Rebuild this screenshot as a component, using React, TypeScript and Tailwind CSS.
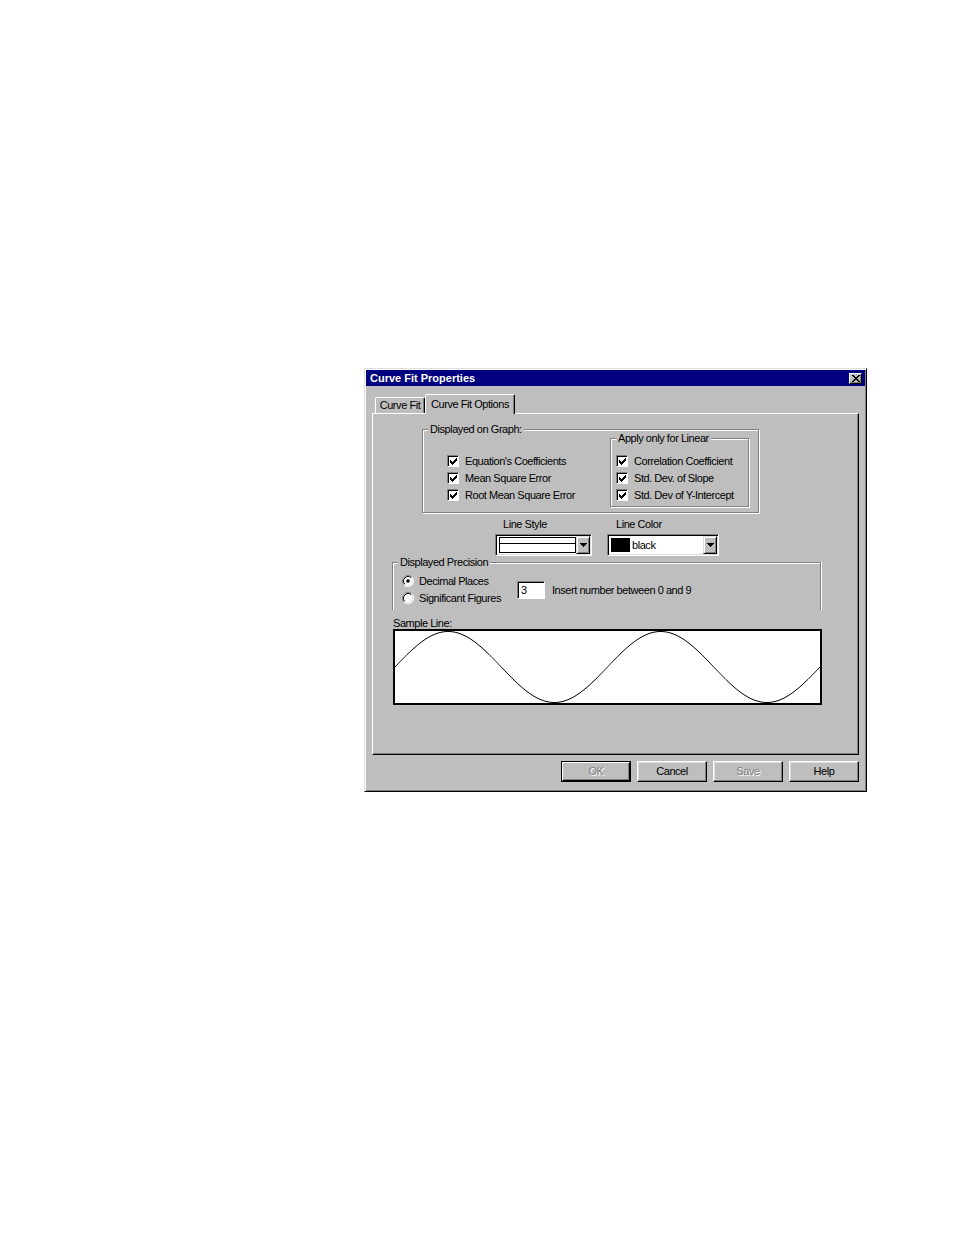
import React from "react";

function Check() {
  return (
    <span className="w-[12px] h-[12px] shrink-0 bg-white border border-t-[#808080] border-l-[#808080] border-r-white border-b-white shadow-[inset_1px_1px_0_#000] flex items-center justify-center pl-[1px] pt-[1px]">
      <svg width="7" height="7" viewBox="0 0 7 7" shapeRendering="crispEdges">
        <path d="M0 2h1v3H0z M1 3h1v3H1z M2 4h1v3H2z M3 3h1v3H3z M4 2h1v3H4z M5 1h1v3H5z M6 0h1v3H6z" fill="#000" />
      </svg>
    </span>
  );
}

function CheckRow({ label }: { label: string }) {
  return (
    <div className="flex items-center h-[12px]">
      <Check />
      <span className="ml-[6px] leading-[12px] whitespace-nowrap">{label}</span>
    </div>
  );
}

function Radio({ on }: { on?: boolean }) {
  return (
    <svg width="12" height="12" viewBox="0 0 12 12" className="shrink-0">
      <circle cx="6" cy="6" r="5.5" fill="#fff" />
      <path d="M2.11 9.89 A5.5 5.5 0 0 1 9.89 2.11" stroke="#808080" strokeWidth="1" fill="none" />
      <path d="M9.89 2.11 A5.5 5.5 0 0 1 2.11 9.89" stroke="#fff" strokeWidth="1" fill="none" />
      <path d="M2.82 9.18 A4.5 4.5 0 0 1 9.18 2.82" stroke="#000" strokeWidth="1" fill="none" />
      <path d="M9.18 2.82 A4.5 4.5 0 0 1 2.82 9.18" stroke="#dfdfdf" strokeWidth="1" fill="none" />
      {on && <circle cx="6" cy="6" r="1.8" fill="#000" />}
    </svg>
  );
}

function RadioRow({ label, on }: { label: string; on?: boolean }) {
  return (
    <div className="flex items-center h-[12px]">
      <Radio on={on} />
      <span className="ml-[5px] leading-[12px] whitespace-nowrap">{label}</span>
    </div>
  );
}

function Arrow() {
  return (
    <span className="w-[14px] h-full shrink-0 ml-auto bg-[#bebebe] border border-t-[#dfdfdf] border-l-[#dfdfdf] border-r-black border-b-black shadow-[inset_1px_1px_0_#fff,inset_-1px_-1px_0_#808080] flex items-center justify-center">
      <svg width="7" height="4" viewBox="0 0 7 4" shapeRendering="crispEdges">
        <path d="M0 0h7v1H0z M1 1h5v1H1z M2 2h3v1H2z M3 3h1v1H3z" fill="#000" />
      </svg>
    </span>
  );
}

function Button({ label, disabled, isDefault }: { label: string; disabled?: boolean; isDefault?: boolean }) {
  const text = disabled ? (
    <span className="text-[#808080] [text-shadow:1px_1px_0_#fff]">{label}</span>
  ) : (
    <span>{label}</span>
  );
  if (isDefault) {
    return (
      <div className="w-[70px] h-[21px] border border-black">
        <div className="w-full h-full border border-t-white border-l-white border-r-black border-b-black shadow-[inset_-1px_-1px_0_#808080] flex items-center justify-center leading-[12px] pb-[2px]">
          {text}
        </div>
      </div>
    );
  }
  return (
    <div className="w-[70px] h-[21px] border border-t-white border-l-white border-r-black border-b-black shadow-[inset_-1px_-1px_0_#808080,inset_1px_1px_0_#dfdfdf] flex items-center justify-center leading-[12px] pb-[2px]">
      {text}
    </div>
  );
}

export default function App() {
  const W = 425;
  const pts = Array.from({ length: W + 1 }, (_, i) => `${i},${(36 - 35.5 * Math.sin((2 * Math.PI * 2 * i) / W)).toFixed(2)}`).join(" ");

  return (
    <div className="w-[954px] h-[1235px] bg-white pt-[368px] pl-[364px] font-['Liberation_Sans',Arial,sans-serif] text-[11px] tracking-[-0.45px] text-black">
      <div className="w-[503px] h-[424px] bg-[#bebebe] border border-t-[#dfdfdf] border-l-[#dfdfdf] border-r-black border-b-black shadow-[inset_1px_1px_0_#fff,inset_-1px_-1px_0_#808080] pt-[1px] px-[1px]">
        {/* Title bar */}
        <div className="h-[16px] bg-[#000080] flex items-center pl-[4px] pr-[3px]">
          <span className="text-white font-bold tracking-normal text-[11px] leading-[14px]">Curve Fit Properties</span>
          <span className="ml-auto w-[13px] h-[11px] bg-[#bebebe] border border-t-white border-l-white border-r-black border-b-black shadow-[inset_-1px_-1px_0_#808080] flex items-center justify-center">
            <svg width="8" height="7" viewBox="0 0 8 7" shapeRendering="crispEdges">
              <path d="M0 0h2v1H0z M6 0h2v1H6z M1 1h2v1H1z M5 1h2v1H5z M2 2h4v1H2z M3 3h2v1H3z M2 4h4v1H2z M1 5h2v1H1z M5 5h2v1H5z M0 6h2v1H0z M6 6h2v1H6z" fill="#000" />
            </svg>
          </span>
        </div>

        <div className="ml-[6px] w-[487px]">
          {/* Tabs */}
          <div className="mt-[8px] h-[19px] flex items-end pl-[3px]">
            <div className="w-[50px] h-[16px] border-t border-l border-r border-t-white border-l-white border-r-black rounded-t-[2px] shadow-[inset_-1px_0_0_#808080] flex items-center justify-center leading-[12px] pb-[2px]">
              Curve Fit
            </div>
            <div className="relative z-10 -mb-[1px] w-[90px] h-[20px] bg-[#bebebe] border-t border-l border-r border-t-white border-l-white border-r-black rounded-t-[2px] shadow-[inset_-1px_0_0_#808080] flex items-center justify-center leading-[12px] pb-[1px]">
              Curve Fit Options
            </div>
          </div>

          {/* Panel */}
          <div className="h-[342px] border border-t-white border-l-white border-r-black border-b-black shadow-[inset_-1px_-1px_0_#808080]">
            {/* Displayed on Graph */}
            <fieldset className="ml-[49px] mt-[9px] w-[337px] border border-[#808080] shadow-[1px_1px_0_#fff,inset_1px_1px_0_#fff]">
              <legend className="ml-[5px] px-[2px] leading-[12px] bg-[#bebebe]">Displayed on Graph:</legend>
              <div className="flex items-start pb-[5px]">
                <div className="w-[187px] pl-[24px] pt-[20px] flex flex-col gap-[5px]">
                  <CheckRow label="Equation's Coefficients" />
                  <CheckRow label="Mean Square Error" />
                  <CheckRow label="Root Mean Square Error" />
                </div>
                <fieldset className="-mt-[3px] w-[139px] border border-[#808080] shadow-[1px_1px_0_#fff,inset_1px_1px_0_#fff]">
                  <legend className="ml-[5px] px-[2px] leading-[12px] bg-[#bebebe]">Apply only for Linear</legend>
                  <div className="pl-[5px] pt-[11px] pb-[5px] flex flex-col gap-[5px]">
                    <CheckRow label="Correlation Coefficient" />
                    <CheckRow label="Std. Dev. of Slope" />
                    <CheckRow label="Std. Dev of Y-Intercept" />
                  </div>
                </fieldset>
              </div>
            </fieldset>

            {/* Line style / color */}
            <div className="flex mt-[5px] ml-[122px]">
              <div className="w-[97px]">
                <div className="pl-[8px] leading-[12px]">Line Style</div>
                <div className="mt-[4px] h-[22px] bg-white border border-t-[#808080] border-l-[#808080] border-r-white border-b-white shadow-[inset_1px_1px_0_#000,inset_-1px_-1px_0_#dfdfdf] p-[1px] flex items-center">
                  <div className="ml-[2px] w-[77px] h-[16px] border border-black flex flex-col">
                    <div className="h-[6px] border-b border-black"></div>
                  </div>
                  <Arrow />
                </div>
              </div>
              <div className="w-[112px] ml-[15px]">
                <div className="pl-[9px] leading-[12px]">Line Color</div>
                <div className="mt-[4px] h-[22px] bg-white border border-t-[#808080] border-l-[#808080] border-r-white border-b-white shadow-[inset_1px_1px_0_#000,inset_-1px_-1px_0_#dfdfdf] p-[1px] flex items-center">
                  <div className="ml-[2px] w-[19px] h-[14px] bg-black"></div>
                  <span className="ml-[2px] leading-[12px]">black</span>
                  <Arrow />
                </div>
              </div>
            </div>

            {/* Displayed Precision */}
            <fieldset className="ml-[19px] w-[429px] border border-b-0 border-[#808080] shadow-[1px_0_0_#fff,inset_1px_1px_0_#fff]">
              <legend className="ml-[5px] px-[2px] leading-[12px] bg-[#bebebe]">Displayed Precision</legend>
              <div className="flex items-start pt-[7px] pb-[6px]">
                <div className="w-[124px] pl-[9px] flex flex-col gap-[5px]">
                  <RadioRow label="Decimal Places" on />
                  <RadioRow label="Significant Figures" />
                </div>
                <div className="mt-[6px] w-[28px] h-[18px] bg-white border border-t-[#808080] border-l-[#808080] border-r-white border-b-white shadow-[inset_1px_1px_0_#000] pl-[3px] leading-[16px]">
                  3
                </div>
                <div className="ml-[7px] mt-[9px] leading-[12px] whitespace-nowrap">Insert number between 0 and 9</div>
              </div>
            </fieldset>

            {/* Sample line */}
            <div className="mt-[7px] ml-[20px] leading-[12px]">Sample Line:</div>
            <div className="ml-[20px] w-[429px] h-[76px] border-2 border-black bg-white">
              <svg width="425" height="72" viewBox="0 0 425 72" className="block">
                <polyline points={pts} fill="none" stroke="#000" strokeWidth="1" />
              </svg>
            </div>
          </div>

          {/* Buttons */}
          <div className="mt-[6px] flex justify-end gap-[6px]">
            <Button label="OK" disabled isDefault />
            <Button label="Cancel" />
            <Button label="Save" disabled />
            <Button label="Help" />
          </div>
        </div>
      </div>
    </div>
  );
}
